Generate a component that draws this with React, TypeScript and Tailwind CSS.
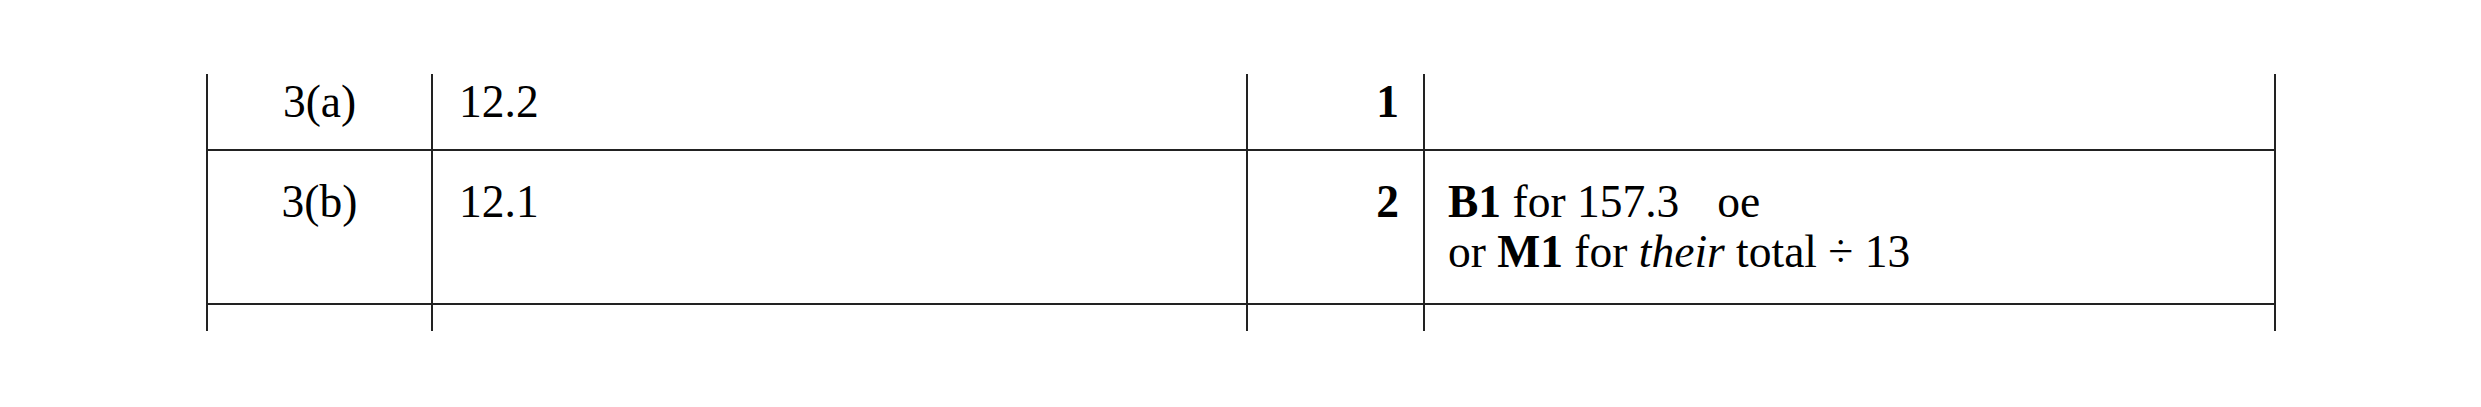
export default function App() {
  const cell = "border-l-2 border-[#222]";
  return (
    <div className="min-h-[407px] bg-white pt-[74px] text-black" style={{ fontFamily: '"Liberation Serif", "Times New Roman", serif' }}>
      <div className="ml-[206px] grid w-[2070px] grid-cols-[225px_815px_177px_853px] text-[45.5px] leading-[50px]">
        {/* row 3(a) */}
        <div className={`${cell} h-[77px] border-b-2 pt-[3px] text-center`}>3(a)</div>
        <div className={`${cell} h-[77px] border-b-2 pt-[3px] pl-[26px]`}>12.2</div>
        <div className={`${cell} h-[77px] border-b-2 pt-[3px] pr-[24px] text-right font-bold`}>1</div>
        <div className={`${cell} h-[77px] border-b-2 border-r-2 pt-[3px]`}></div>

        {/* row 3(b) */}
        <div className={`${cell} h-[154px] border-b-2 pt-[26px] text-center`}>3(b)</div>
        <div className={`${cell} h-[154px] border-b-2 pt-[26px] pl-[26px]`}>12.1</div>
        <div className={`${cell} h-[154px] border-b-2 pt-[26px] pr-[24px] text-right font-bold`}>2</div>
        <div className={`${cell} h-[154px] border-b-2 border-r-2 pt-[26px] pl-[23px]`}>
          <div>
            <b>B1</b> for 157.3<span className="ml-[38px]">oe</span>
          </div>
          <div>
            or <b>M1</b> for <i>their</i> total ÷ 13
          </div>
        </div>

        {/* next row, cut off */}
        <div className={`${cell} h-[26px]`}></div>
        <div className={`${cell} h-[26px]`}></div>
        <div className={`${cell} h-[26px]`}></div>
        <div className={`${cell} h-[26px] border-r-2`}></div>
      </div>
    </div>
  );
}
